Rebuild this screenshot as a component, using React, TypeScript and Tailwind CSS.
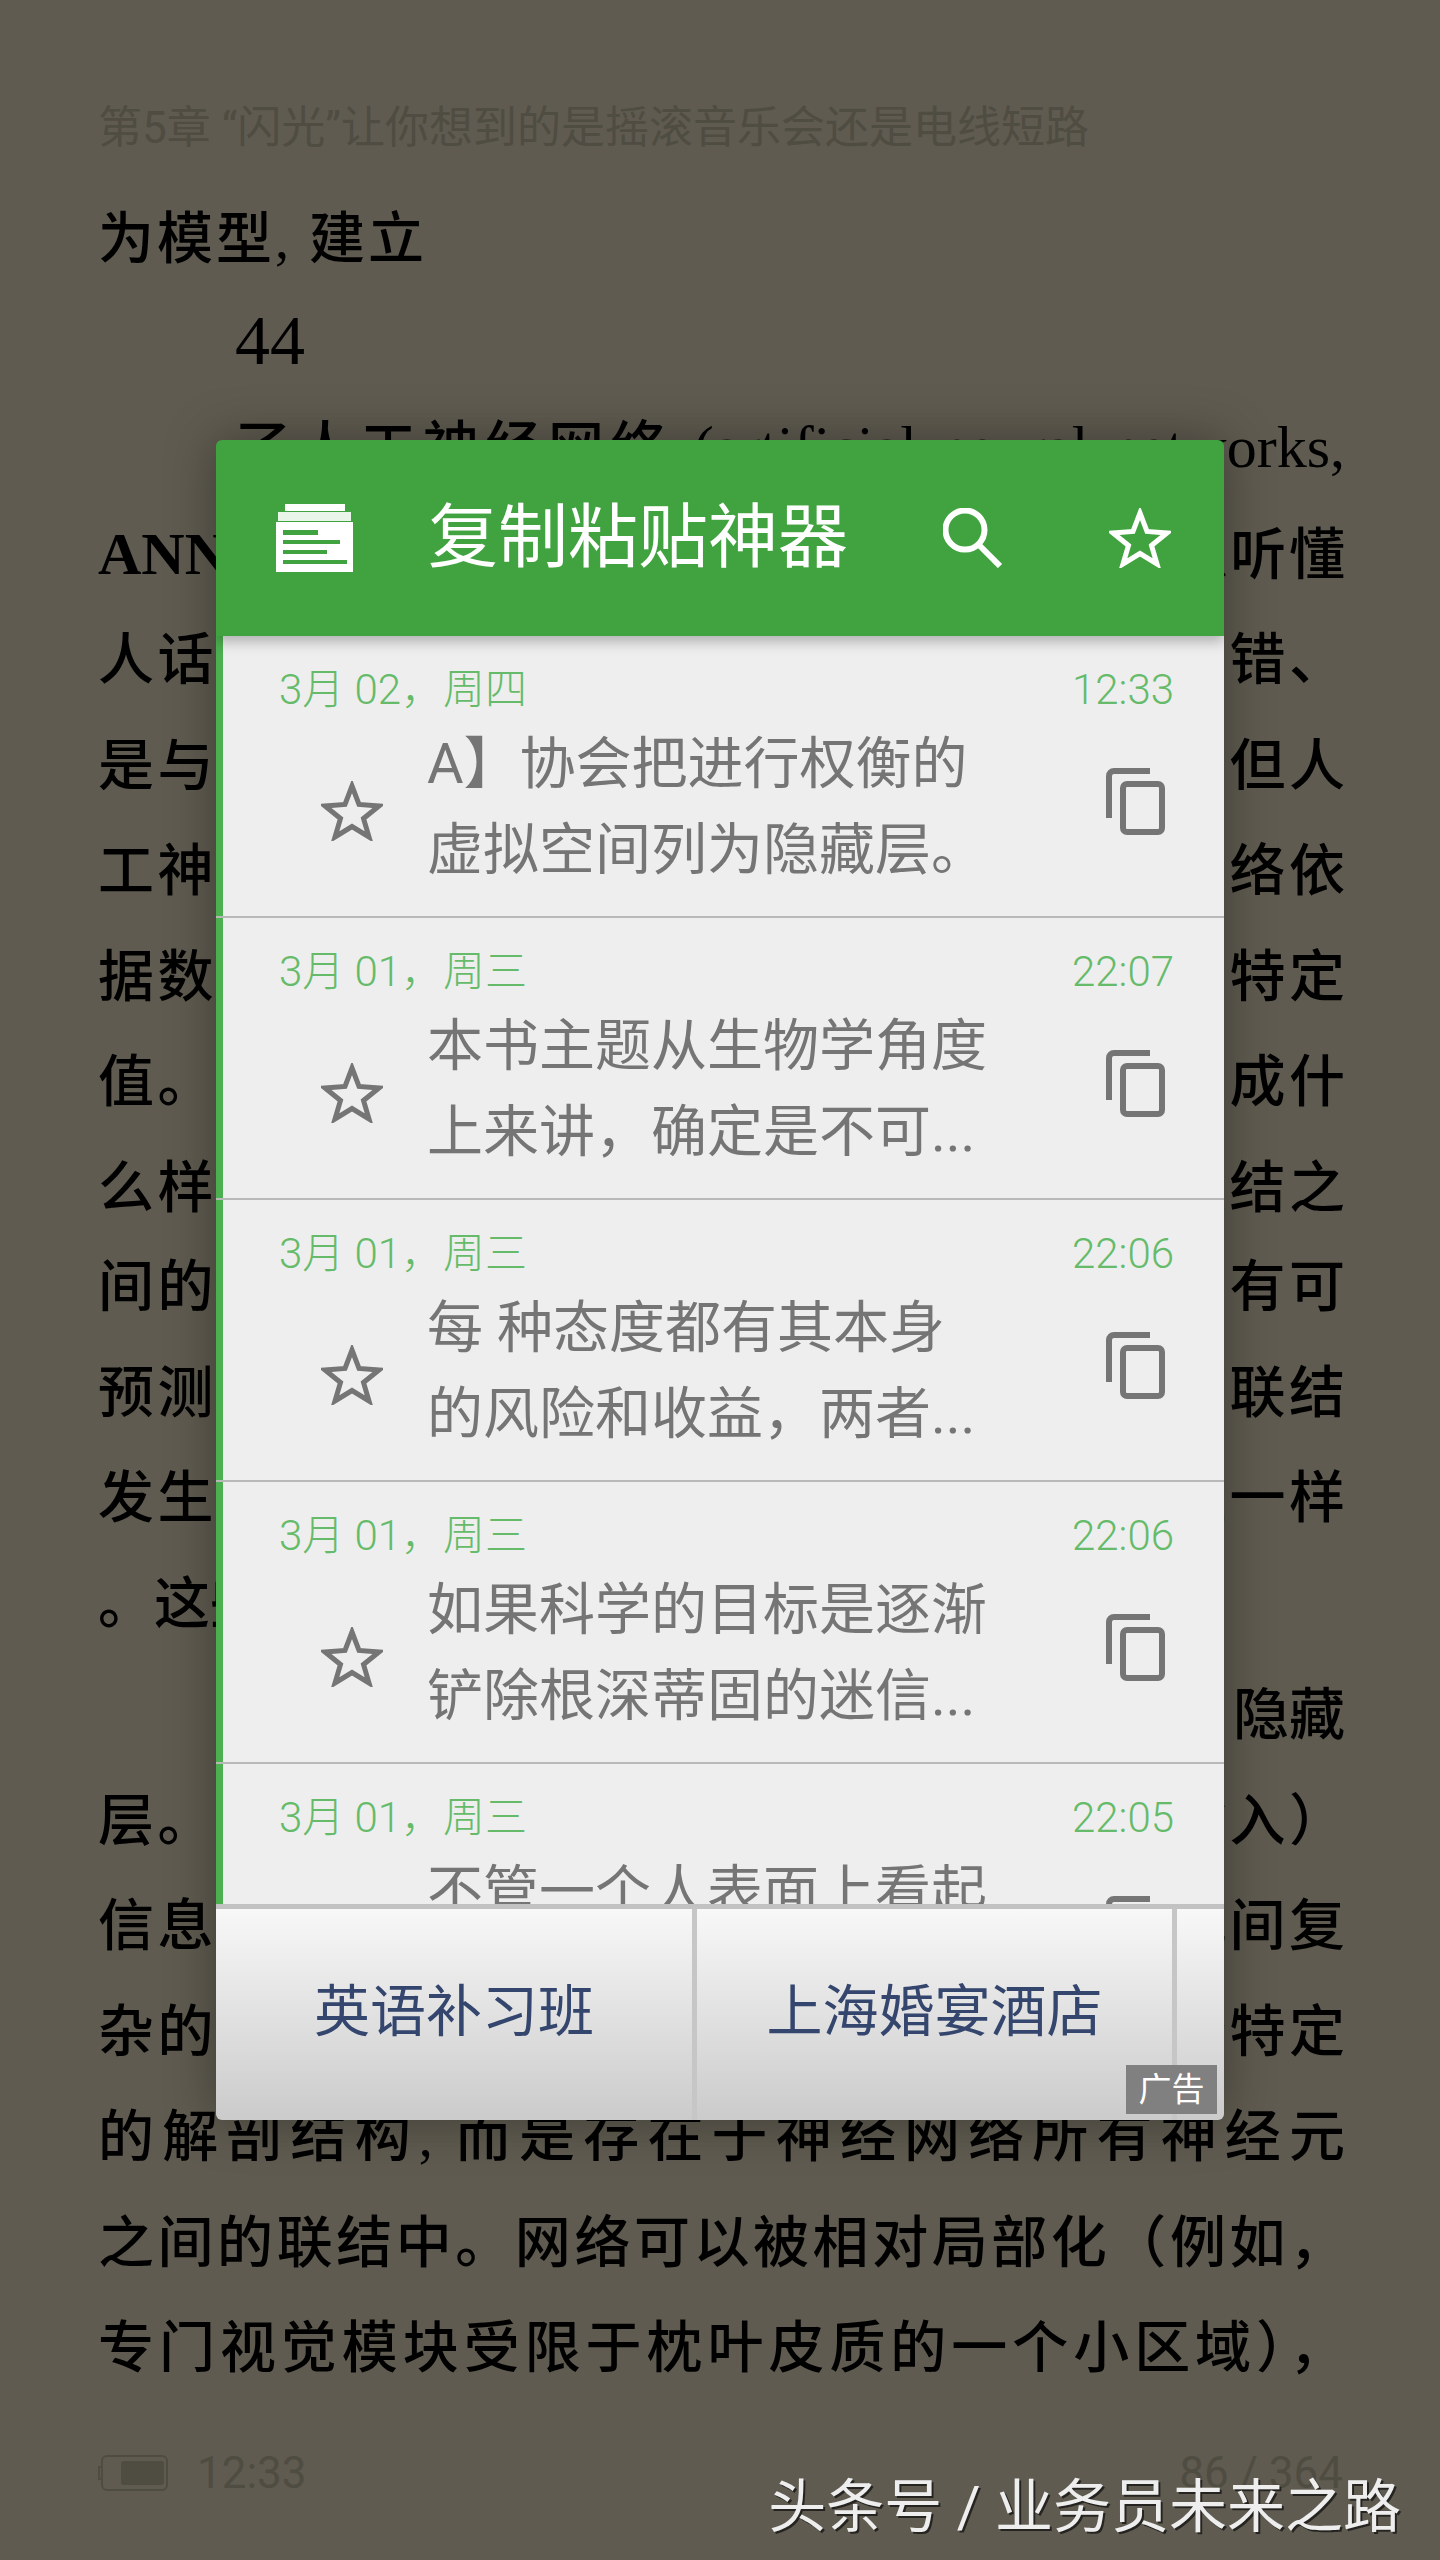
import type { ReactNode } from 'react';

const bookFont = { fontFamily: '"Liberation Serif", "Noto Sans CJK SC", serif' };

const Latin = ({ children, bold }: { children: ReactNode; bold?: boolean }) => (
  <span className={bold ? 'text-[60px] font-bold' : 'text-[60px]'}>{children}</span>
);

type BookLine = { text: ReactNode; className: string };

const justified = 'whitespace-nowrap [text-align-last:justify]';

// the scanned page has slightly uneven line spacing, hence the odd margins
const bookLines: BookLine[] = [
  { text: '为模型, 建立', className: 'whitespace-nowrap tracking-[3px] mb-[-5px]' },
  { text: <span className="text-[70px]">44</span>, className: 'whitespace-nowrap pl-[137px] mb-[-3px]' },
  {
    text: (
      <>
        了人工神经网络 <Latin>(artificial neural networks,</Latin>
      </>
    ),
    className: `${justified} pl-[137px]`,
  },
  {
    text: (
      <>
        <Latin bold>ANN</Latin>）是一种模拟人脑神经结构让机器可以听懂
      </>
    ),
    className: justified,
  },
  { text: '人话的系统，这种网络本身并没有任何对与错、', className: justified },
  { text: '是与非的判断，只有输入与输出的误差值，但人', className: justified },
  { text: '工神经网络与真实的生物神经网络之间的网络依', className: justified },
  { text: '据数据不断调整每个联结的权重，直到达到特定', className: justified },
  { text: '值。和大脑一样，这些网络最终究竟会演变成什', className: justified },
  { text: '么样取决于神经元之间的那些数以亿计的联结之', className: `${justified} mb-[-6px]` },
  { text: '间的强度，这些强度的细微变化并不总是具有可', className: justified },
  { text: '预测的规律，只有当神经元之间的这种反复联结', className: justified },
  { text: '发生改变时，网络才能够像大脑学习的过程一样', className: justified },
  { text: '。这些', className: 'whitespace-nowrap mb-[6px]' },
  { text: '隐藏', className: 'whitespace-nowrap text-right' },
  { text: '层。从外部世界接收到信息经由这一层（输入）', className: justified },
  { text: '信息，经过这些隐藏层的处理之后形成彼此间复', className: justified },
  { text: '杂的运算，其结果并不在于大脑中任何一个特定', className: justified },
  { text: '的解剖结构, 而是存在于神经网络所有神经元', className: justified },
  { text: '之间的联结中。网络可以被相对局部化（例如，', className: justified },
  { text: '专门视觉模块受限于枕叶皮质的一个小区域），', className: justified },
];

const clips = [
  { date: '3月 02，周四', time: '12:33', lines: ['A】协会把进行权衡的', '虚拟空间列为隐藏层。'] },
  { date: '3月 01，周三', time: '22:07', lines: ['本书主题从生物学角度', '上来讲，确定是不可...'] },
  { date: '3月 01，周三', time: '22:06', lines: ['每 种态度都有其本身', '的风险和收益，两者...'] },
  { date: '3月 01，周三', time: '22:06', lines: ['如果科学的目标是逐渐', '铲除根深蒂固的迷信...'] },
  { date: '3月 01，周三', time: '22:05', lines: ['不管一个人表面上看起'] },
];

const StarIcon = ({ color }: { color: string }) => (
  <svg width="62" height="60" viewBox="0 0 62 60" fill="none" className="shrink-0">
    <polygon
      points="31,5 38,23.5 58,25 42.5,37.5 48,56 31,45.5 14,56 19.5,37.5 4,25 24,23.5"
      stroke={color}
      strokeWidth="5"
    />
  </svg>
);

const CopyIcon = () => (
  <svg width="59" height="67" viewBox="0 0 59 67" fill="none" className="shrink-0">
    <path d="M44 3H8a5 5 0 0 0-5 5v42" stroke="#757575" strokeWidth="6" />
    <rect x="17" y="16" width="39" height="48" rx="4" stroke="#757575" strokeWidth="6" />
  </svg>
);

const LogoIcon = () => (
  <svg width="77" height="68" viewBox="0 0 77 68" className="shrink-0">
    <rect x="9" y="0" width="60" height="7" fill="#ffffff" />
    <rect x="2" y="8" width="73" height="9" fill="#eaf5ea" />
    <rect x="0" y="18" width="77" height="50" fill="#ffffff" />
    <rect x="7" y="26" width="35" height="5" fill="#41a33f" />
    <rect x="7" y="36" width="57" height="4" fill="#41a33f" />
    <rect x="7" y="46" width="44" height="4" fill="#41a33f" />
    <rect x="7" y="56" width="64" height="4" fill="#41a33f" />
  </svg>
);

const SearchIcon = () => (
  <svg width="60" height="60" viewBox="0 0 60 60" fill="none" className="shrink-0">
    <circle cx="22" cy="22" r="19.5" stroke="#ffffff" strokeWidth="6" />
    <path d="M35 36L57 58" stroke="#ffffff" strokeWidth="6" />
  </svg>
);

const BatteryIcon = () => (
  <svg width="70" height="36" viewBox="0 0 70 36" fill="none" className="shrink-0">
    <path d="M3 12H1v12h2" stroke="#4f4c42" strokeWidth="2" />
    <rect x="4" y="1" width="65" height="34" rx="5" stroke="#4f4c42" strokeWidth="2" />
    <rect x="23" y="6" width="43" height="24" rx="3" fill="#4f4c42" />
  </svg>
);

const ClipRow = ({ clip }: { clip: (typeof clips)[number] }) => (
  <div className="shrink-0 flex flex-col h-[282px]">
    <div className="flex-1 min-h-0 border-l-[7px] border-[#4caf50] bg-[#eeeeee]">
      <div className="flex justify-between pt-[30px] pl-[56px] pr-[50px] text-[42px] leading-[48px] font-light text-[#66bb6a]">
        <span>{clip.date}</span>
        <span>{clip.time}</span>
      </div>
      <div className="flex items-center h-[172px] mt-[7px] pl-[98px]">
        <div className="mt-[8px]">
          <StarIcon color="#757575" />
        </div>
        <div className="self-start ml-[44px] w-[570px] text-[56px] leading-[86px] text-[#757575] whitespace-nowrap">
          {clip.lines.map((line, i) => (
            <p key={i}>{line}</p>
          ))}
        </div>
        <div className="ml-[109px] mb-[12px]">
          <CopyIcon />
        </div>
      </div>
    </div>
    <div className="h-[2px] bg-[#b8b8b8]" />
  </div>
);

export default function App() {
  return (
    <div
      className="relative w-[1440px] h-[2560px] overflow-hidden bg-[#5f5b50]"
      style={{ fontFamily: 'Roboto, "Noto Sans CJK SC", sans-serif' }}
    >
      {/* the book page behind the popup */}
      <div className="pl-[98px] pr-[95px] pt-[100px]">
        <div className="text-[44px] leading-[56px] text-[#4f4c42] whitespace-nowrap">
          第5章 “闪光”让你想到的是摇滚音乐会还是电线短路
        </div>
        <div className="mt-[31px] text-[56px] leading-[105.5px] text-black font-medium" style={bookFont}>
          {bookLines.map((line, i) => (
            <div key={i} className={line.className}>
              {line.text}
            </div>
          ))}
        </div>
      </div>

      {/* reader footer */}
      <div className="absolute left-[98px] right-[97px] top-[2445px] flex items-center text-[44px] leading-[56px] text-[#4f4c42]">
        <BatteryIcon />
        <span className="ml-[29px]">12:33</span>
        <span className="ml-auto">86 / 364</span>
      </div>

      {/* clipboard popup */}
      <div className="absolute left-[216px] top-[440px] w-[1008px] h-[1680px] flex flex-col rounded-md overflow-hidden shadow-[0_0_50px_rgba(0,0,0,0.35)]">
        <div className="relative z-10 shrink-0 h-[196px] flex items-center bg-[#41a33f] shadow-[0_6px_12px_rgba(0,0,0,0.25)]">
          <div className="ml-[60px] -mt-[1px]">
            <LogoIcon />
          </div>
          <span className="ml-[75px] text-[70px] leading-none text-white whitespace-nowrap">复制粘贴神器</span>
          <div className="ml-[95px]">
            <SearchIcon />
          </div>
          <div className="ml-[106px]">
            <StarIcon color="#ffffff" />
          </div>
        </div>

        <div className="flex-1 min-h-0 flex flex-col overflow-hidden bg-[#eeeeee]">
          {clips.map((clip, i) => (
            <ClipRow key={i} clip={clip} />
          ))}
        </div>

        <div className="relative shrink-0 h-[216px] flex border-t-[5px] border-[#c2c2c2] bg-gradient-to-b from-[#f8f8f8] to-[#cbcbcb] text-[56px] text-[#34466e]">
          <div className="w-[481px] pb-[5px] flex items-center justify-center border-r-[5px] border-[#c6c6c6]">英语补习班</div>
          <div className="w-[480px] pb-[5px] flex items-center justify-center border-r-[5px] border-[#c6c6c6]">上海婚宴酒店</div>
          <div className="absolute right-[7px] bottom-[6px] w-[91px] h-[49px] flex items-center justify-center bg-[#808080] text-[33px] text-white">
            广告
          </div>
        </div>
      </div>

      {/* watermark */}
      <div className="absolute right-[39px] top-[2470px] text-[58px] leading-[74px] text-[#eeeeee] whitespace-nowrap [text-shadow:2px_2px_0_rgba(0,0,0,0.6)]">
        头条号 / 业务员未来之路
      </div>
    </div>
  );
}
